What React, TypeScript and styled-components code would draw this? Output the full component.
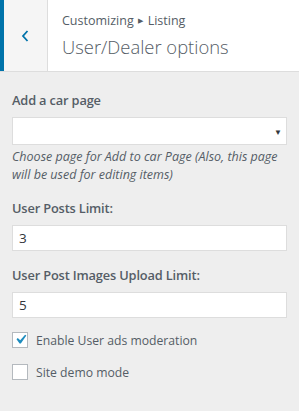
import React from "react";
import styled, {createGlobalStyle} from "styled-components";

const Global = createGlobalStyle`
  html, body {
    margin: 0;
    padding: 0;
    background: #eeeeee;
  }
  body {
    font-family: "Open Sans", "Noto Sans", sans-serif;
    color: #555d66;
  }
`

const Panel = styled.div`
  width: 299px;
  height: 411px;
  background: #eeeeee;
  box-sizing: border-box;
`

const Header = styled.div`
  display: flex;
  height: 71px;
  background: #fff;
  border-bottom: 1px solid #dddddd;
`

const BackButton = styled.button`
  width: 48px;
  flex-shrink: 0;
  border: none;
  border-left: 4px solid #0073aa;
  border-right: 1px solid #dddddd;
  background: #f5f5f5;
  padding: 0 2px 0 0;
  display: flex;
  align-items: center;
  justify-content: center;
  color: #0073aa;
`

const Titles = styled.div`
  padding: 13px 0 0 14px;
`

const Crumb = styled.div`
  font-size: 12.5px;
  line-height: 16px;
  color: #555d66;
`

const Arrow = styled.span`
  font-size: 7px;
  vertical-align: 2px;
  margin: 0 5px 0 4px;
`

const Title = styled.div`
  font-size: 18.4px;
  font-weight: 300;
  line-height: 26px;
  margin-top: 5px;
  color: #555d66;
`

const Body = styled.div`
  padding: 18px 12px 0 12px;
`

const Field = styled.div`
  margin-bottom: 14px;
`

const Label = styled.div`
  font-size: 12.8px;
  font-weight: 600;
  line-height: 20px;
  margin-bottom: 7px;
  letter-spacing: -0.15px;
`

const SelectBox = styled.div`
  height: 28px;
  background: #fff;
  border: 1px solid #dddddd;
  box-sizing: border-box;
  display: flex;
  align-items: center;
  justify-content: flex-end;
  padding-right: 4px;
  color: #32373c;
  font-size: 8px;
`

const Description = styled.div`
  font-style: italic;
  font-size: 12.5px;
  line-height: 18px;
  margin-top: 3px;
  color: #555d66;
`

const Input = styled.div`
  height: 26px;
  background: #fff;
  border: 1px solid #dddddd;
  box-sizing: border-box;
  padding-left: 6px;
  font-size: 13.5px;
  line-height: 24px;
  color: #32373c;
`

const CheckRow = styled.label`
  display: flex;
  align-items: center;
  height: 16px;
  margin-bottom: 16px;
  font-size: 12.2px;
`

const Box = styled.span`
  width: 16px;
  height: 16px;
  box-sizing: border-box;
  background: #fff;
  border: 1px solid #b4b9be;
  display: flex;
  align-items: center;
  justify-content: center;
  margin-right: 8px;
  overflow: visible;
`

const Check: React.FC<{checked?: boolean, label: string}> = ({checked, label}) => (
    <CheckRow>
        <Box>
            {checked && (
                <svg width="19" height="19" viewBox="0 0 20 20" style={{flexShrink: 0, marginTop: -2}}>
                    <path d="M14.83 4.89l1.34.94-5.81 8.38H9.02L5.78 9.67l1.34-1.25 2.57 2.4z" fill="#1e8cbe"/>
                </svg>
            )}
        </Box>
        {label}
    </CheckRow>
)

export default function App() {
    return (
        <Panel>
            <Global/>
            <Header>
                <BackButton>
                    <svg width="10" height="16" viewBox="0 0 10 16">
                        <path d="M7.5 3 L3 8 L7.5 13" fill="none" stroke="#0073aa" strokeWidth="1.8"/>
                    </svg>
                </BackButton>
                <Titles>
                    <Crumb>Customizing<Arrow>▶</Arrow>Listing</Crumb>
                    <Title>User/Dealer options</Title>
                </Titles>
            </Header>
            <Body>
                <Field>
                    <Label>Add a car page</Label>
                    <SelectBox>▼</SelectBox>
                    <Description>Choose page for Add to car Page (Also, this page will be used for editing items)</Description>
                </Field>
                <Field>
                    <Label>User Posts Limit:</Label>
                    <Input>3</Input>
                </Field>
                <Field>
                    <Label>User Post Images Upload Limit:</Label>
                    <Input>5</Input>
                </Field>
                <Check checked label="Enable User ads moderation"/>
                <Check label="Site demo mode"/>
            </Body>
        </Panel>
    )
}
